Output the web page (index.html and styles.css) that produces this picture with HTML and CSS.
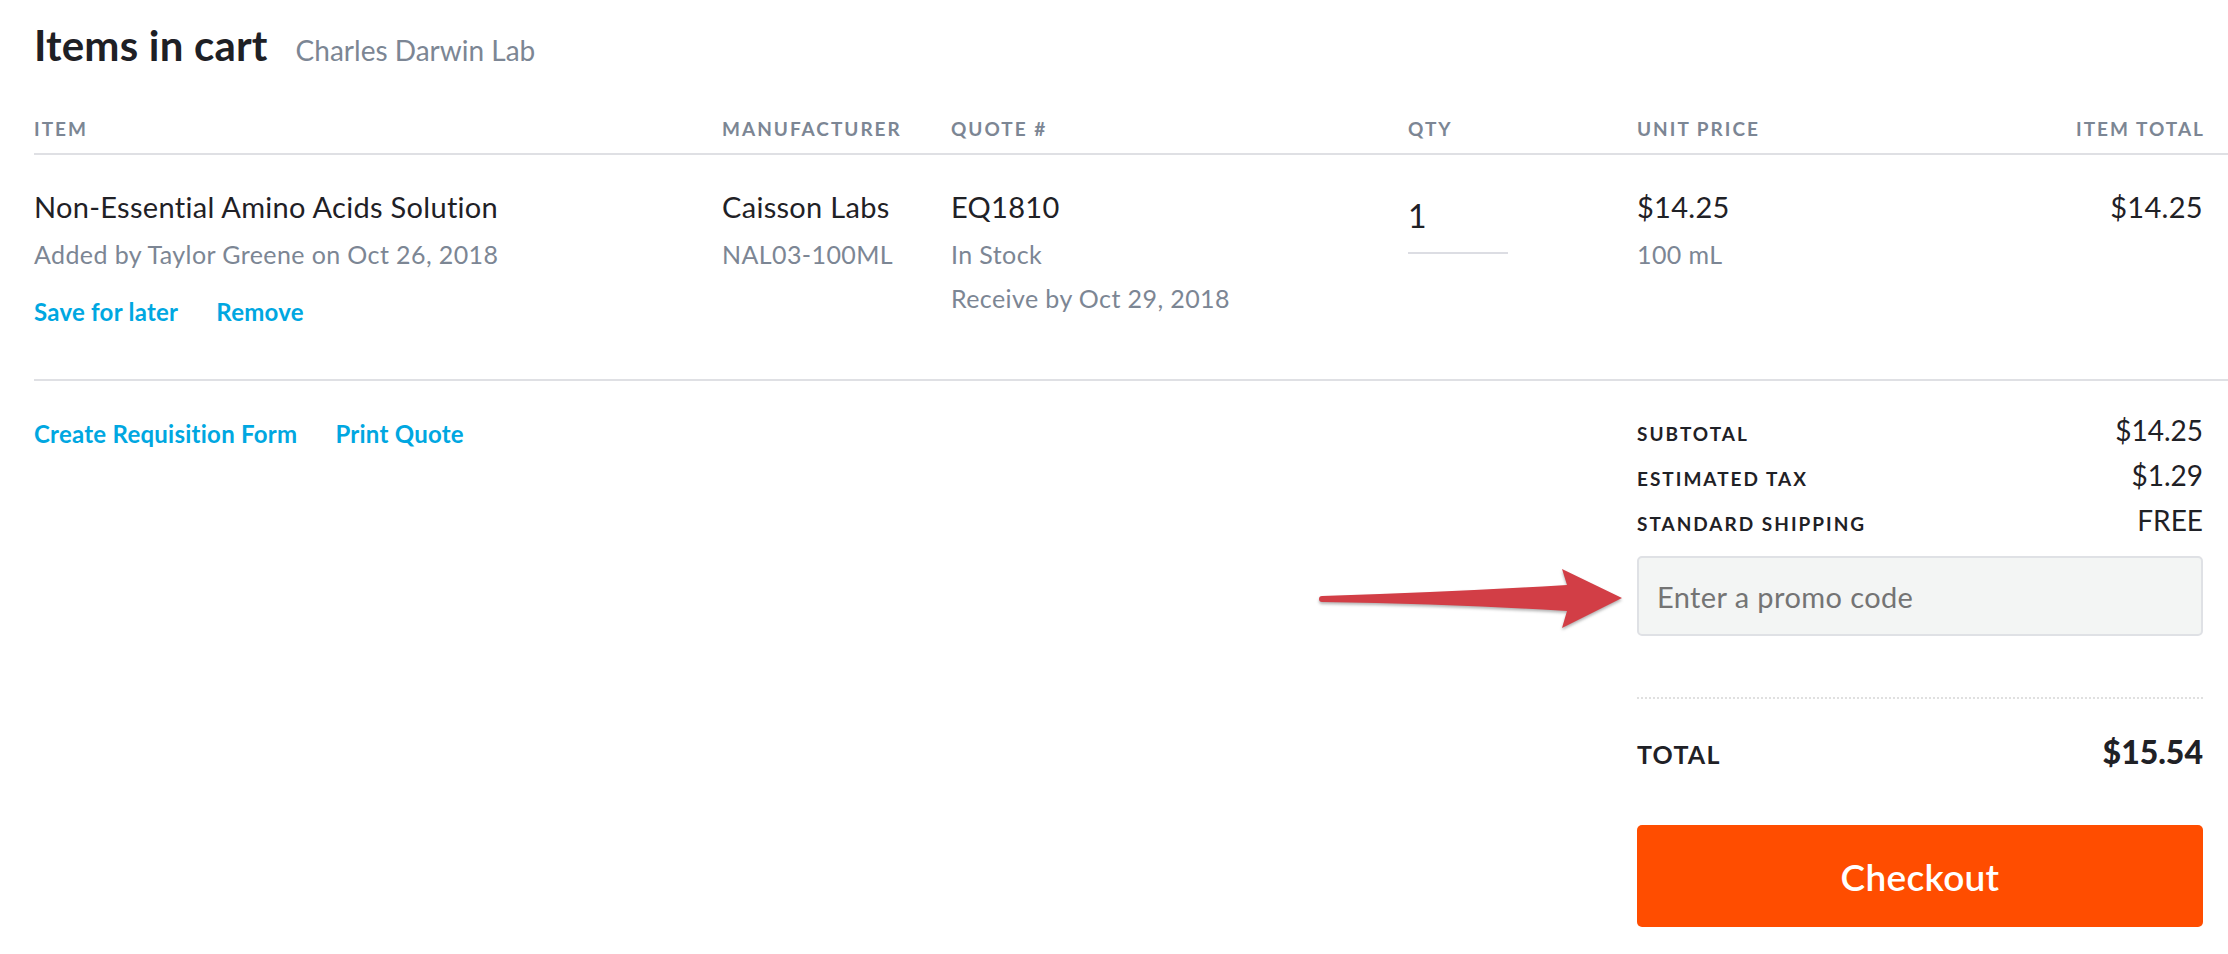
FILE: index.html
```html
<!DOCTYPE html>
<html lang="en">
<head>
<meta charset="utf-8">
<title>Items in cart</title>
<link rel="stylesheet" href="styles.css">
</head>
<body>
<div class="page">
  <header class="title-row">
    <h1 class="title">Items in cart</h1>
    <span class="subtitle">Charles Darwin Lab</span>
  </header>

  <div class="cart-table">
    <div class="grid head">
      <div class="th">Item</div>
      <div class="th">Manufacturer</div>
      <div class="th">Quote #</div>
      <div class="th">Qty</div>
      <div class="th">Unit Price</div>
      <div class="th right">Item Total</div>
    </div>
    <div class="grid row">
      <div class="cell">
        <div class="primary">Non-Essential Amino Acids Solution</div>
        <div class="secondary">Added by Taylor Greene on Oct 26, 2018</div>
        <div class="actions">
          <a class="link" href="#">Save for later</a>
          <a class="link" href="#">Remove</a>
        </div>
      </div>
      <div class="cell">
        <div class="primary">Caisson Labs</div>
        <div class="secondary">NAL03-100ML</div>
      </div>
      <div class="cell">
        <div class="primary">EQ1810</div>
        <div class="secondary">In Stock</div>
        <div class="secondary">Receive by Oct 29, 2018</div>
      </div>
      <div class="cell">
        <div class="qty">1</div>
      </div>
      <div class="cell">
        <div class="primary">$14.25</div>
        <div class="secondary">100 mL</div>
      </div>
      <div class="cell right">
        <div class="primary">$14.25</div>
      </div>
    </div>
  </div>

  <section class="bottom">
    <div class="actions bottom-links">
      <a class="link" href="#">Create Requisition Form</a>
      <a class="link" href="#">Print Quote</a>
    </div>
    <div class="summary">
      <div class="sum-row"><span class="sum-label">Subtotal</span><span class="sum-value">$14.25</span></div>
      <div class="sum-row"><span class="sum-label">Estimated Tax</span><span class="sum-value">$1.29</span></div>
      <div class="sum-row"><span class="sum-label">Standard Shipping</span><span class="sum-value">FREE</span></div>
      <input class="promo" type="text" placeholder="Enter a promo code">
      <div class="dots"></div>
      <div class="total-row"><span class="total-label">Total</span><span class="total-value">$15.54</span></div>
      <button class="checkout" type="button">Checkout</button>
    </div>
  </section>

  <svg class="arrow" width="330" height="80" viewBox="0 0 330 80" aria-hidden="true">
    <path d="M12,36 Q140,32 257,25 L252,9 L312,38 L252,68 L257,51 Q140,44 12,42 A3,3 0 0 1 12,36 Z" fill="#d23e46"/>
  </svg>
</div>
</body>
</html>
```

FILE: styles.css
```css
* { box-sizing: border-box; }
html, body { margin: 0; padding: 0; background: #ffffff; }
body {
  font-family: "Lato", "Liberation Sans", sans-serif;
  color: #1f2126;
}
.page {
  position: relative;
  padding: 20px 0 0 34px;
  width: 2228px;
  height: 954px;
  overflow: hidden;
}
.title-row {
  display: flex;
  align-items: baseline;
  gap: 28px;
  height: 50px;
}
.title {
  margin: 0;
  font-size: 42px;
  line-height: 50px;
  font-weight: 700;
  letter-spacing: 0.2px;
  color: #1e2025;
}
.subtitle {
  font-size: 28px;
  color: #7c8694;
}
.cart-table { margin-top: 47px; }
.grid {
  display: grid;
  grid-template-columns: 688px 229px 457px 229px 1fr 1fr;
  padding-right: 25px;
}
.head {
  border-bottom: 2px solid #dfe0e4;
  padding-bottom: 12px;
}
.th {
  font-size: 19px;
  line-height: 24px;
  font-weight: 700;
  letter-spacing: 2px;
  text-transform: uppercase;
  color: #7c8694;
}
.right { text-align: right; }
.th.right { margin-right: -2px; }
.row {
  padding-top: 34px;
  padding-bottom: 52px;
  border-bottom: 2px solid #dfe0e4;
}
.cell { display: flex; flex-direction: column; }
.cell.right { align-items: flex-end; }
.primary {
  font-size: 29px;
  line-height: 36px;
  letter-spacing: 0.3px;
  color: #1f2126;
}
.secondary {
  margin-top: 14px;
  font-size: 25px;
  line-height: 30px;
  letter-spacing: 0.4px;
  color: #7c8694;
}
.actions {
  display: flex;
  gap: 38px;
  margin-top: 28px;
}
.link {
  font-size: 24px;
  line-height: 30px;
  font-weight: 700;
  letter-spacing: 0.25px;
  color: #00a7e1;
  text-decoration: none;
}
.qty {
  width: 100px;
  margin-top: 7px;
  font-size: 32px;
  line-height: 40px;
  padding-bottom: 16px;
  border-bottom: 2px solid #dcdde3;
}
.bottom {
  display: flex;
  justify-content: space-between;
  align-items: flex-start;
  padding: 27px 25px 0 0;
}
.bottom-links { margin-top: 11px; }
.summary {
  width: 566px;
  display: flex;
  flex-direction: column;
}
.sum-row {
  display: flex;
  justify-content: space-between;
  align-items: baseline;
  height: 45px;
  line-height: 45px;
}
.sum-label {
  font-size: 19px;
  font-weight: 700;
  letter-spacing: 2px;
  text-transform: uppercase;
  color: #1f2126;
}
.sum-value {
  font-size: 28px;
  color: #1f2126;
}
.promo {
  margin-top: 13px;
  height: 80px;
  width: 100%;
  padding: 0 18px;
  background: #f3f5f4;
  border: 2px solid #dfe1e5;
  border-radius: 5px;
  font-family: inherit;
  font-size: 29px;
  letter-spacing: 0.4px;
  color: #1f2126;
  outline: none;
}
.promo::placeholder { color: #747474; }
.dots {
  margin-top: 61px;
  border-top: 2px dotted #e0e0e0;
}
.total-row {
  display: flex;
  justify-content: space-between;
  align-items: baseline;
  margin-top: 33px;
  line-height: 40px;
}
.total-label {
  font-size: 25px;
  font-weight: 700;
  letter-spacing: 1.2px;
  text-transform: uppercase;
  color: #1f2126;
}
.total-value {
  font-size: 32px;
  font-weight: 900;
  color: #1f2126;
}
.checkout {
  margin-top: 51px;
  height: 102px;
  width: 100%;
  border: none;
  border-radius: 5px;
  background: #ff4d00;
  color: #ffffff;
  font-family: inherit;
  font-size: 37px;
  font-weight: 600;
  letter-spacing: 0.3px;
  cursor: pointer;
}
.arrow {
  position: absolute;
  left: 1310px;
  top: 560px;
  filter: drop-shadow(0 2px 1.5px rgba(0, 0, 0, 0.3));
}
```
